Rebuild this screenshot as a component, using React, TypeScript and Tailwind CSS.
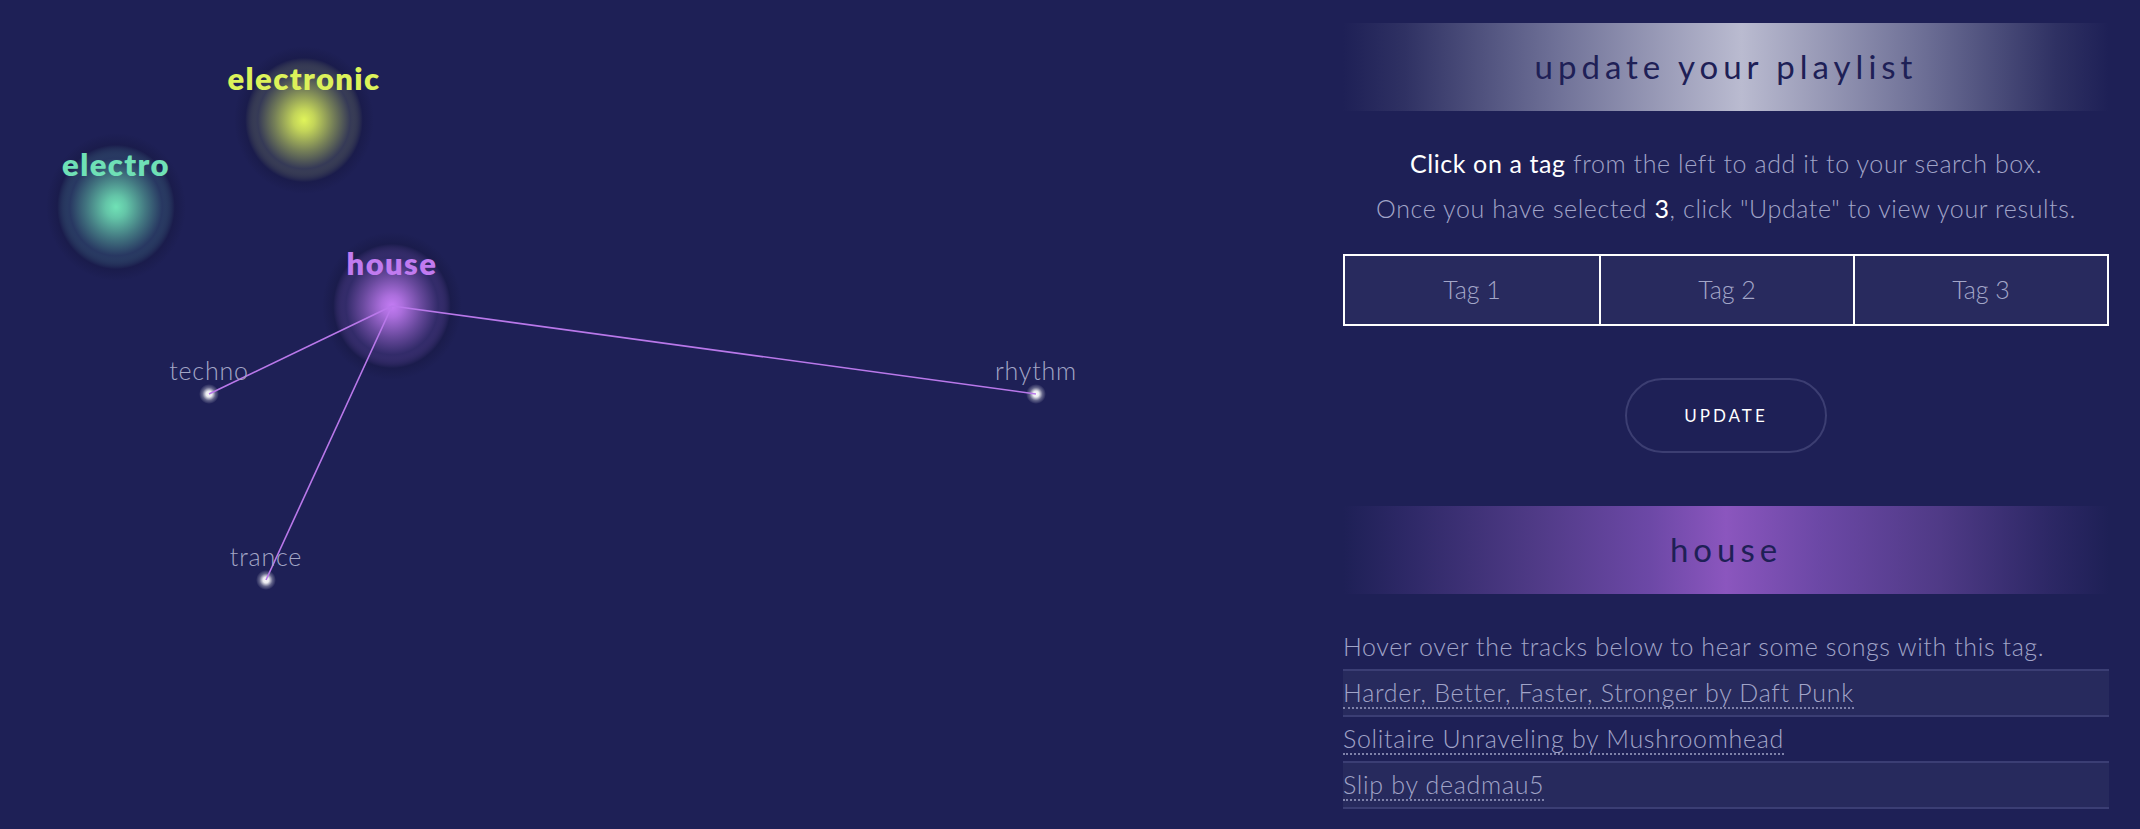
import React from "react";

function Graph() {
  const house = { x: 392, y: 306 };
  const leaves = [
    { name: "techno", x: 209, y: 394 },
    { name: "rhythm", x: 1036, y: 394 },
    { name: "trance", x: 266, y: 580 },
  ];
  const big = [
    { name: "electronic", x: 304, y: 120, color: "#e0f45a", label: "#dcf25a", ly: 78 },
    { name: "electro", x: 116, y: 207, color: "#70e2b6", label: "#6fe0b6", ly: 164 },
    { name: "house", x: 392, y: 306, color: "#c47cf4", label: "#c17bf0", ly: 263 },
  ];
  return (
    <div className="relative h-full w-full">
      <svg className="absolute inset-0" width="1320" height="829">
        <defs>
          {big.map((b) => (
            <radialGradient key={b.name} id={`g-${b.name}`}>
              <stop offset="0%" stopColor={b.color} stopOpacity="1" />
              <stop offset="15%" stopColor={b.color} stopOpacity="0.85" />
              <stop offset="42%" stopColor={b.color} stopOpacity="0.45" />
              <stop offset="66%" stopColor={b.color} stopOpacity="0.12" />
              <stop offset="84%" stopColor="#131439" stopOpacity="0.35" />
              <stop offset="100%" stopColor="#131439" stopOpacity="0" />
            </radialGradient>
          ))}
          <radialGradient id="g-dot">
            <stop offset="0%" stopColor="#ffffff" stopOpacity="1" />
            <stop offset="30%" stopColor="#ffffff" stopOpacity="0.9" />
            <stop offset="65%" stopColor="#ffffff" stopOpacity="0.3" />
            <stop offset="100%" stopColor="#ffffff" stopOpacity="0" />
          </radialGradient>
        </defs>
        {big.map((b) => (
          <ellipse key={b.name} cx={b.x} cy={b.y} rx="70" ry="74" fill={`url(#g-${b.name})`} />
        ))}
        {leaves.map((l) => (
          <circle key={l.name} cx={l.x} cy={l.y} r="10" fill="url(#g-dot)" />
        ))}
        {leaves.map((l) => (
          <line
            key={l.name + "l"}
            x1={house.x}
            y1={house.y}
            x2={l.x}
            y2={l.y}
            stroke="#b978ea"
            strokeWidth="1.6"
          />
        ))}
      </svg>
      {big.map((b) => (
        <div
          key={b.name + "t"}
          className="absolute -translate-x-1/2 -translate-y-1/2 text-[31px] font-extrabold leading-none tracking-[1.4px]"
          style={{ left: b.x, top: b.ly, color: b.label }}
        >
          {b.name}
        </div>
      ))}
      {leaves.map((l) => (
        <div
          key={l.name + "t"}
          className="absolute -translate-x-1/2 -translate-y-1/2 text-[25px] font-light leading-none tracking-[0.8px] text-[#a3a6c6]"
          style={{ left: l.x, top: l.y - 24 }}
        >
          {l.name}
        </div>
      ))}
    </div>
  );
}

const tracks = [
  "Harder, Better, Faster, Stronger by Daft Punk",
  "Solitaire Unraveling by Mushroomhead",
  "Slip by deadmau5",
];

export default function App() {
  return (
    <div
      className="flex h-[829px] w-[2140px] overflow-hidden bg-[#1e2056]"
      style={{ fontFamily: "Lato, 'Open Sans', sans-serif" }}
    >
      <div className="h-full flex-1">
        <Graph />
      </div>
      <div className="mr-[31px] flex w-[766px] flex-col">
        <div className="mt-[23px] flex h-[88px] items-center justify-center bg-[linear-gradient(to_right,#1e2056_0%,#2f3163_8%,#6c6e95_27%,#babbd0_52%,#6c6e95_76%,#2f3163_93%,#1e2056_100%)]">
          <span className="text-[33px] font-normal tracking-[5px] text-[#1e2056]">update your playlist</span>
        </div>
        <div className="mt-[30px] text-center text-[25px] font-light leading-[45px] tracking-[0.6px] text-[#a1a4c8]">
          <div>
            <span className="font-normal text-white">Click on a tag</span> from the left to add it to your search box.
          </div>
          <div>
            Once you have selected <span className="font-normal text-white">3</span>, click "Update" to view your results.
          </div>
        </div>
        <div className="mt-[23px] grid h-[72px] grid-cols-3 border-2 border-white bg-[#282a5e]">
          {["Tag 1", "Tag 2", "Tag 3"].map((t, i) => (
            <div
              key={t}
              className={`flex items-center justify-center text-[25px] font-light text-[#a3a6c8] ${i > 0 ? "border-l-2 border-white" : ""}`}
            >
              {t}
            </div>
          ))}
        </div>
        <div className="mt-[52px] flex justify-center">
          <button className="flex h-[75px] w-[202px] items-center justify-center rounded-full border-2 border-[#3c3e72] text-[17px] font-normal tracking-[3px] text-white">
            UPDATE
          </button>
        </div>
        <div className="mt-[53px] flex h-[88px] items-center justify-center bg-[linear-gradient(to_right,#1e2056_0%,#2d2866_8%,#4f3a86_25%,#6c48a6_40%,#8b56be_50%,#6c48a6_62%,#4f3a86_78%,#2d2866_92%,#1e2056_100%)]">
          <span className="text-[33px] font-normal tracking-[5px] text-[#1e2056]">house</span>
        </div>
        <div className="mt-[30px] text-[25px] font-light leading-[45px] tracking-[0.6px] text-[#a1a4c8]">
          Hover over the tracks below to hear some songs with this tag.
        </div>
        <div className="border-b-2 border-[#3b3e74]">
          {tracks.map((t, i) => (
            <div
              key={t}
              className={`flex h-[46px] items-center border-t-2 border-[#3b3e74] ${i % 2 === 0 ? "bg-[#272a5d]" : ""}`}
            >
              <span className="border-b-2 border-dotted border-[#7f82aa] text-[25px] font-light leading-[30px] tracking-[0.7px] text-[#a1a4c8]">
                {t}
              </span>
            </div>
          ))}
        </div>
      </div>
    </div>
  );
}
